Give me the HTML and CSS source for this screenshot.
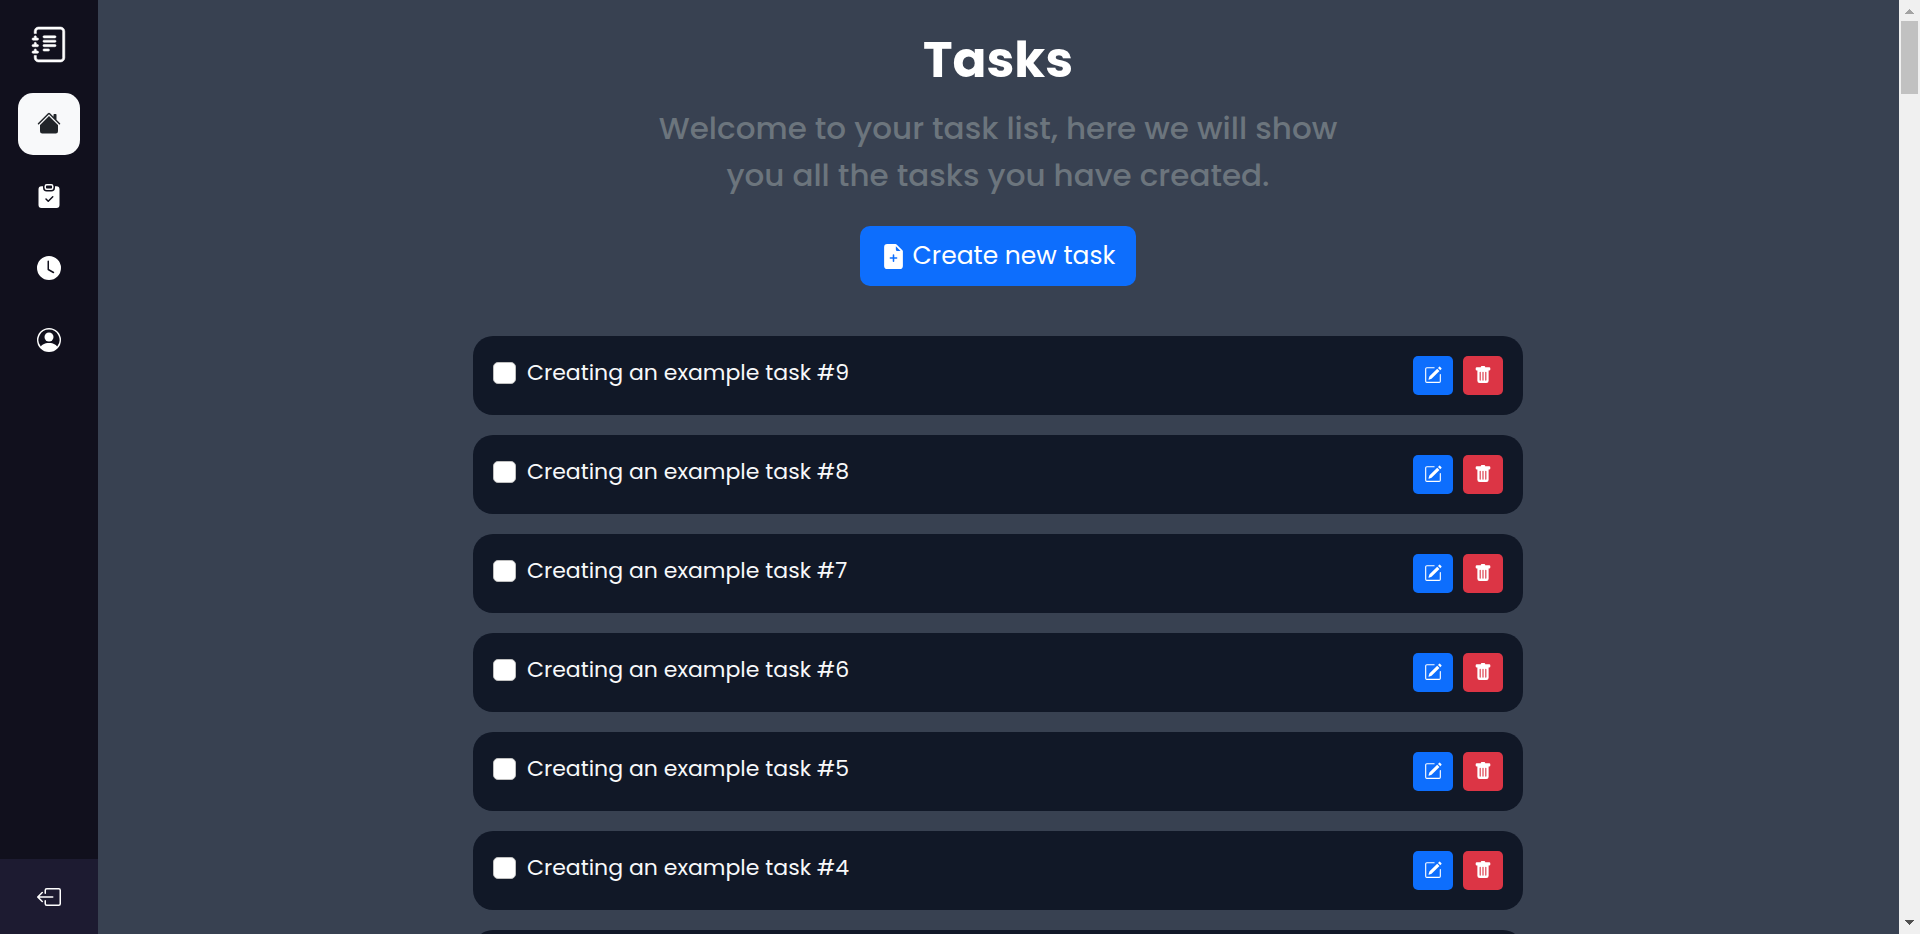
FILE: index.html
```html
<!DOCTYPE html>
<html lang="en">
<head>
<meta charset="utf-8">
<meta name="viewport" content="width=device-width, initial-scale=1">
<title>Tasks</title>
<link rel="stylesheet" href="styles.css">
</head>
<body>
<svg class="sprite" aria-hidden="true">
  <symbol id="pencil" viewBox="0 0 16 16"><path d="M15.502 1.94a.5.5 0 0 1 0 .706L14.459 3.69l-2-2L13.502.646a.5.5 0 0 1 .707 0l1.293 1.293zm-1.75 2.456-2-2L4.939 9.21a.5.5 0 0 0-.121.196l-.805 2.414a.25.25 0 0 0 .316.316l2.414-.805a.5.5 0 0 0 .196-.12l6.813-6.814z"/><path fill-rule="evenodd" d="M1 13.5A1.5 1.5 0 0 0 2.500 15h11a1.500 1.500 0 0 0 1.500-1.500v-6a.5.5 0 0 0-1 0v6a.5.5 0 0 1-.5.5h-11a.5.5 0 0 1-.5-.5v-11a.5.5 0 0 1 .5-.5H9a.5.5 0 0 0 0-1H2.500A1.500 1.500 0 0 0 1 2.500v11z"/></symbol>
  <symbol id="trash" viewBox="0 0 16 16"><path d="M2.500 1a1 1 0 0 0-1 1v1a1 1 0 0 0 1 1H3v9a2 2 0 0 0 2 2h6a2 2 0 0 0 2-2V4h.5a1 1 0 0 0 1-1V2a1 1 0 0 0-1-1H10a1 1 0 0 0-1-1H7a1 1 0 0 0-1 1H2.500zm3 4a.5.5 0 0 1 .5.5v7a.5.5 0 0 1-1 0v-7a.5.5 0 0 1 .5-.5zM8 5a.5.5 0 0 1 .5.5v7a.5.5 0 0 1-1 0v-7A.5.5 0 0 1 8 5zm3 .5v7a.5.5 0 0 1-1 0v-7a.5.5 0 0 1 1 0z"/></symbol>
</svg>
<div class="app">
  <aside class="sidebar">
    <a class="brand" href="#" aria-label="Task journal">
      <svg class="brand-icon" viewBox="0 0 16 16"><path d="M5 10.5a.5.5 0 0 1 .5-.5h2a.5.5 0 0 1 0 1h-2a.5.5 0 0 1-.5-.5zm0-2a.5.5 0 0 1 .5-.5h5a.5.5 0 0 1 0 1h-5a.5.5 0 0 1-.5-.5zm0-2a.5.5 0 0 1 .5-.5h5a.5.5 0 0 1 0 1h-5a.5.5 0 0 1-.5-.5zm0-2a.5.5 0 0 1 .5-.5h5a.5.5 0 0 1 0 1h-5a.5.5 0 0 1-.5-.5z"/><path d="M3 0h10a2 2 0 0 1 2 2v12a2 2 0 0 1-2 2H3a2 2 0 0 1-2-2v-1h1v1a1 1 0 0 0 1 1h10a1 1 0 0 0 1-1V2a1 1 0 0 0-1-1H3a1 1 0 0 0-1 1v1H1V2a2 2 0 0 1 2-2z"/><path d="M1 5v-.5a.5.5 0 0 1 1 0V5h.5a.5.5 0 0 1 0 1h-2a.5.5 0 0 1 0-1H1zm0 3v-.5a.5.5 0 0 1 1 0V8h.5a.5.5 0 0 1 0 1h-2a.5.5 0 0 1 0-1H1zm0 3v-.5a.5.5 0 0 1 1 0v.5h.5a.5.5 0 0 1 0 1h-2a.5.5 0 0 1 0-1H1z"/></svg>
    </a>
    <nav class="nav">
      <a class="nav-link active" href="#" aria-label="Home">
        <svg class="nav-icon" viewBox="0 0 16 16"><path d="M8.707 1.500a1 1 0 0 0-1.414 0L.646 8.146a.5.5 0 0 0 .708.708L8 2.207l6.646 6.647a.5.5 0 0 0 .708-.708L13 5.793V2.500a.5.5 0 0 0-.5-.5h-1a.5.5 0 0 0-.5.5v1.293L8.707 1.500Z"/><path d="m8 3.293 6 6V13.500a1.500 1.500 0 0 1-1.500 1.500h-9A1.500 1.500 0 0 1 2 13.500V9.293l6-6Z"/></svg>
      </a>
      <a class="nav-link" href="#" aria-label="Tasks">
        <svg class="nav-icon" viewBox="0 0 16 16"><path d="M6.500 0A1.500 1.500 0 0 0 5 1.500v1A1.500 1.500 0 0 0 6.500 4h3A1.500 1.500 0 0 0 11 2.500v-1A1.500 1.500 0 0 0 9.500 0h-3Zm3 1a.5.5 0 0 1 .5.5v1a.5.5 0 0 1-.5.5h-3a.5.5 0 0 1-.5-.5v-1a.5.5 0 0 1 .5-.5h3Z"/><path d="M4 1.500H3a2 2 0 0 0-2 2V14a2 2 0 0 0 2 2h10a2 2 0 0 0 2-2V3.500a2 2 0 0 0-2-2h-1v1A2.500 2.500 0 0 1 9.500 5h-3A2.500 2.500 0 0 1 4 2.500v-1Zm6.854 7.354-3 3a.5.5 0 0 1-.708 0l-1.500-1.500a.5.5 0 0 1 .708-.708L7.500 10.793l2.646-2.647a.5.5 0 0 1 .708.708Z"/></svg>
      </a>
      <a class="nav-link" href="#" aria-label="History">
        <svg class="nav-icon" viewBox="0 0 16 16"><path d="M16 8A8 8 0 1 1 0 8a8 8 0 0 1 16 0zM8 3.500a.5.5 0 0 0-1 0V9a.5.5 0 0 0 .252.434l3.500 2a.5.5 0 0 0 .496-.868L8 8.710V3.500z"/></svg>
      </a>
      <a class="nav-link" href="#" aria-label="Profile">
        <svg class="nav-icon" viewBox="0 0 16 16"><path d="M11 6a3 3 0 1 1-6 0 3 3 0 0 1 6 0z"/><path fill-rule="evenodd" d="M0 8a8 8 0 1 1 16 0A8 8 0 0 1 0 8zm8-7a7 7 0 0 0-5.468 11.370C3.242 11.226 4.805 10 8 10s4.757 1.225 5.468 2.370A7 7 0 0 0 8 1z"/></svg>
      </a>
    </nav>
    <button class="logout" type="button" aria-label="Log out">
      <svg class="nav-icon" viewBox="0 0 16 16"><path fill-rule="evenodd" d="M6 12.500a.5.5 0 0 0 .5.5h8a.5.5 0 0 0 .5-.5v-9a.5.5 0 0 0-.5-.5h-8a.5.5 0 0 0-.5.5v2a.5.5 0 0 1-1 0v-2A1.500 1.500 0 0 1 6.500 2h8A1.500 1.500 0 0 1 16 3.500v9a1.500 1.500 0 0 1-1.500 1.500h-8A1.500 1.500 0 0 1 5 12.500v-2a.5.5 0 0 1 1 0v2z"/><path fill-rule="evenodd" d="M.146 8.354a.5.5 0 0 1 0-.708l3-3a.5.5 0 1 1 .708.708L1.707 7.500H10.500a.5.5 0 0 1 0 1H1.707l2.147 2.146a.5.5 0 0 1-.708.708l-3-3z"/></svg>
    </button>
  </aside>

  <main class="content">
    <header class="intro">
      <h1 class="title">Tasks</h1>
      <p class="subtitle">Welcome to your task list, here we will show you all the tasks you have created.</p>
      <button class="create" type="button">
        <svg class="create-icon" viewBox="0 0 16 16" aria-hidden="true"><path d="M9.293 0H4a2 2 0 0 0-2 2v12a2 2 0 0 0 2 2h8a2 2 0 0 0 2-2V4.707A1 1 0 0 0 13.707 4L10 .293A1 1 0 0 0 9.293 0zM9.500 3.500v-2l3 3h-2a1 1 0 0 1-1-1zM8.500 7v1.500H10a.5.5 0 0 1 0 1H8.500V11a.5.5 0 0 1-1 0V9.500H6a.5.5 0 0 1 0-1h1.500V7a.5.5 0 0 1 1 0z"/></svg>
        Create new task
      </button>
    </header>
    <ul class="tasks">
      <li class="task"><label class="task-label"><input class="check" type="checkbox">Creating an example task #9</label><div class="actions"><button class="action edit" type="button" aria-label="Edit task 9"><svg class="action-icon"><use href="#pencil"/></svg></button><button class="action delete" type="button" aria-label="Delete task 9"><svg class="action-icon"><use href="#trash"/></svg></button></div></li>
      <li class="task"><label class="task-label"><input class="check" type="checkbox">Creating an example task #8</label><div class="actions"><button class="action edit" type="button" aria-label="Edit task 8"><svg class="action-icon"><use href="#pencil"/></svg></button><button class="action delete" type="button" aria-label="Delete task 8"><svg class="action-icon"><use href="#trash"/></svg></button></div></li>
      <li class="task"><label class="task-label"><input class="check" type="checkbox">Creating an example task #7</label><div class="actions"><button class="action edit" type="button" aria-label="Edit task 7"><svg class="action-icon"><use href="#pencil"/></svg></button><button class="action delete" type="button" aria-label="Delete task 7"><svg class="action-icon"><use href="#trash"/></svg></button></div></li>
      <li class="task"><label class="task-label"><input class="check" type="checkbox">Creating an example task #6</label><div class="actions"><button class="action edit" type="button" aria-label="Edit task 6"><svg class="action-icon"><use href="#pencil"/></svg></button><button class="action delete" type="button" aria-label="Delete task 6"><svg class="action-icon"><use href="#trash"/></svg></button></div></li>
      <li class="task"><label class="task-label"><input class="check" type="checkbox">Creating an example task #5</label><div class="actions"><button class="action edit" type="button" aria-label="Edit task 5"><svg class="action-icon"><use href="#pencil"/></svg></button><button class="action delete" type="button" aria-label="Delete task 5"><svg class="action-icon"><use href="#trash"/></svg></button></div></li>
      <li class="task"><label class="task-label"><input class="check" type="checkbox">Creating an example task #4</label><div class="actions"><button class="action edit" type="button" aria-label="Edit task 4"><svg class="action-icon"><use href="#pencil"/></svg></button><button class="action delete" type="button" aria-label="Delete task 4"><svg class="action-icon"><use href="#trash"/></svg></button></div></li>
      <li class="task"><label class="task-label"><input class="check" type="checkbox">Creating an example task #3</label><div class="actions"><button class="action edit" type="button" aria-label="Edit task 3"><svg class="action-icon"><use href="#pencil"/></svg></button><button class="action delete" type="button" aria-label="Delete task 3"><svg class="action-icon"><use href="#trash"/></svg></button></div></li>
    </ul>
  </main>

  <div class="scrollbar" aria-hidden="true">
    <svg class="arrow arrow-up" viewBox="0 0 9 5"><path d="M4 0h1v1h1v1h1v1h1v1h1v1H0V4h1V3h1V2h1V1h1z"/></svg>
    <div class="thumb"></div>
    <svg class="arrow arrow-down" viewBox="0 0 9 5"><path d="M0 0h9v1H8v1H7v1H6v1H5v1H4V4H3V3H2V2H1V1H0z"/></svg>
  </div>
</div>
</body>
</html>
```

FILE: styles.css
```css
* {
  box-sizing: border-box;
}

body {
  margin: 0;
  background: #384151;
  color: #f8f9fa;
  font-family: Poppins, Inter, sans-serif;
}

button {
  border: 0;
  padding: 0;
  color: #fff;
  font-family: inherit;
  cursor: pointer;
}

svg {
  display: block;
  fill: currentColor;
}

.sprite {
  display: none;
}

.app {
  display: flex;
  height: 100vh;
}

/* Sidebar */

.sidebar {
  display: flex;
  flex-direction: column;
  flex: 0 0 98px;
  background: #11101d;
}

.brand {
  display: flex;
  justify-content: center;
  padding: 27px 0 31px;
  color: #fff;
}

.brand-icon {
  width: 35px;
  height: 35px;
  overflow: visible;
  stroke: currentColor;
  stroke-width: 0.25;
}

.nav {
  display: flex;
  flex-direction: column;
  align-items: center;
  gap: 10px;
}

.nav-link {
  display: grid;
  place-items: center;
  width: 62px;
  height: 62px;
  border-radius: 15px;
  color: #fff;
}

.nav-link.active {
  padding-bottom: 2px;
  background: #f8f9fa;
  color: #212529;
}

.nav-icon {
  width: 24px;
  height: 24px;
}

.logout {
  display: grid;
  place-items: center;
  height: 75px;
  margin-top: auto;
  background: #1d1b31;
}

/* Content */

.content {
  flex: 1;
  min-width: 0;
  padding-right: 1px;
  overflow-y: auto;
  scrollbar-width: none;
}

.intro {
  display: flex;
  flex-direction: column;
  align-items: center;
  padding: 30px 20px 50px;
  text-align: center;
}

.title {
  margin: 0 0 15px;
  color: #fff;
  font-size: 50px;
  font-weight: 700;
  line-height: 60px;
}

.subtitle {
  max-width: 720px;
  margin: 0 0 27px;
  color: #6c757d;
  font-size: 31px;
  font-weight: 500;
  line-height: 47px;
}

.create {
  display: flex;
  align-items: center;
  gap: 7px;
  padding: 0 21px;
  border-radius: 10px;
  background: #0d6efd;
  font-size: 25px;
  line-height: 60px;
}

.create-icon {
  width: 25px;
  height: 25px;
}

.tasks {
  display: flex;
  flex-direction: column;
  gap: 20px;
  max-width: 1050px;
  margin: 0 auto;
  padding: 0 0 20px;
  list-style: none;
}

.task {
  display: flex;
  justify-content: space-between;
  padding: 20px;
  border-radius: 20px;
  background: #111827;
}

.task-label {
  display: flex;
  align-items: center;
  gap: 11px;
  height: 34px;
  font-size: 22px;
  line-height: 34px;
}

.check {
  appearance: none;
  width: 23px;
  height: 22px;
  margin: 0;
  border: 1px solid #bfbfbf;
  border-radius: 5px;
  background: #fff;
}

.check:checked {
  background: #0d6efd;
}

.actions {
  display: flex;
  gap: 10px;
}

.action {
  display: grid;
  place-items: center;
  width: 40px;
  height: 39px;
  padding-bottom: 2px;
  border-radius: 5px;
}

.edit {
  background: #0d6efd;
}

.delete {
  background: #dc3545;
}

.action-icon {
  width: 18px;
  height: 18px;
}

/* Scrollbar */

.scrollbar {
  display: flex;
  flex-direction: column;
  align-items: center;
  flex: 0 0 21px;
  padding: 9px 0;
  background: #f0f0f0;
}

.arrow {
  width: 9px;
  height: 5px;
}

.arrow-up {
  color: #a3a3a3;
}

.arrow-down {
  margin-top: auto;
  color: #505050;
}

.thumb {
  width: 17px;
  height: 73px;
  margin-top: 7px;
  background: #c1c1c1;
}
```
